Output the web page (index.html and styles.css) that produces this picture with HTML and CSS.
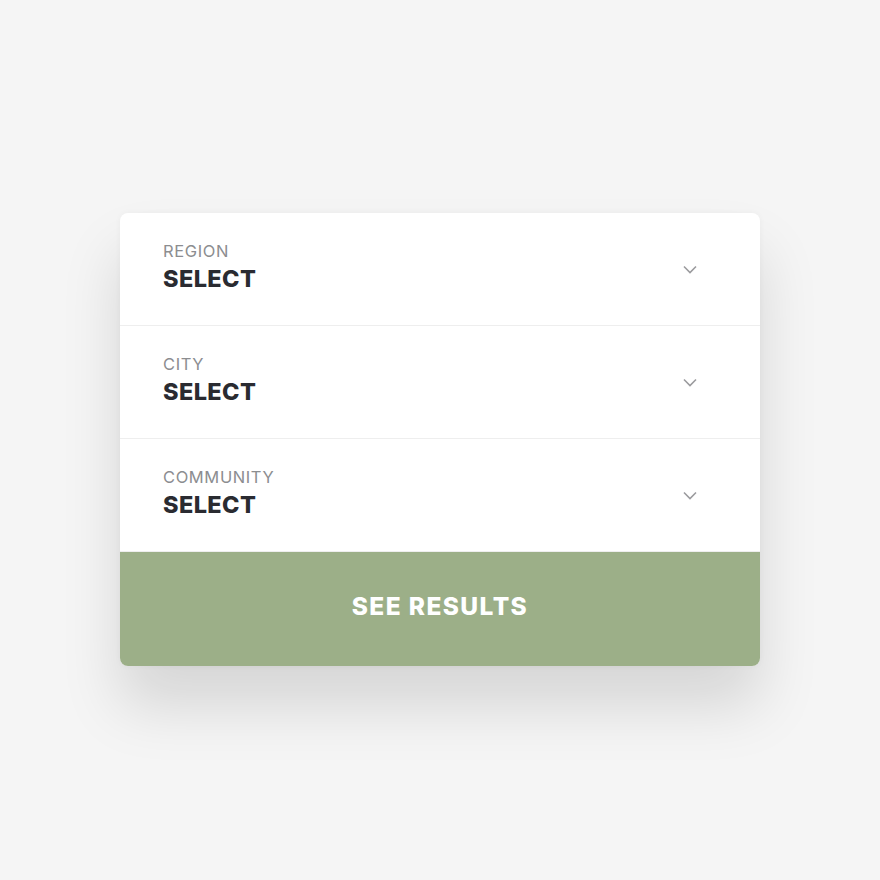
FILE: index.html
```html
<!DOCTYPE html>
<html lang="en">
<head>
    <meta charset="UTF-8">
    <meta name="viewport" content="width=device-width, initial-scale=1.0">
    <title>Search</title>
    <link rel="stylesheet" href="styles.css">
</head>
<body>
    <form class="finder" action="#">
        <div class="field">
            <div class="field-text">
                <p class="label">REGION</p>
                <p class="value">SELECT</p>
            </div>
            <svg class="chevron" width="14" height="9" viewBox="0 0 14 9"><path d="M1 1.5l6 6 6-6" fill="none" stroke="#9b9b9e" stroke-width="1.6"/></svg>
        </div>
        <div class="field">
            <div class="field-text">
                <p class="label">CITY</p>
                <p class="value">SELECT</p>
            </div>
            <svg class="chevron" width="14" height="9" viewBox="0 0 14 9"><path d="M1 1.5l6 6 6-6" fill="none" stroke="#9b9b9e" stroke-width="1.6"/></svg>
        </div>
        <div class="field">
            <div class="field-text">
                <p class="label">COMMUNITY</p>
                <p class="value">SELECT</p>
            </div>
            <svg class="chevron" width="14" height="9" viewBox="0 0 14 9"><path d="M1 1.5l6 6 6-6" fill="none" stroke="#9b9b9e" stroke-width="1.6"/></svg>
        </div>
        <button class="submit">SEE RESULTS</button>
    </form>
</body>
</html>
```

FILE: styles.css
```css
* {
    box-sizing: border-box;
    margin: 0;
}
html {
    background-color: #f5f5f5;
}
body {
    min-height: 880px;
    font-family: Inter, "Noto Sans", sans-serif;
    padding-top: 213px;
}
.finder {
    width: 640px;
    margin: 0 auto;
    background-color: #fff;
    border-radius: 8px;
    box-shadow: 0 40px 60px rgba(0, 0, 0, .13), 0 0 6px rgba(0, 0, 0, .04);
    display: flex;
    flex-direction: column;
    overflow: hidden;
}
.field {
    height: 113px;
    padding: 28px 63px 0 43px;
    display: flex;
    flex-direction: row;
    align-items: flex-start;
    border-bottom: 1px solid #eeeeee;
}
.field:nth-child(3) {
    height: 113px;
}
.field-text {
    flex-grow: 1;
}
.label {
    font-size: 16.5px;
    line-height: 20px;
    letter-spacing: .6px;
    color: #8c8d90;
}
.value {
    margin-top: 4px;
    font-size: 23.5px;
    line-height: 28px;
    font-weight: 800;
    letter-spacing: .4px;
    color: #2a2b31;
}
.chevron {
    margin-top: 24px;
}
.submit {
    height: 114px;
    padding-bottom: 7px;
    border: none;
    background-color: #9caf88;
    color: #fff;
    font-family: inherit;
    font-size: 24.5px;
    font-weight: 800;
    letter-spacing: 1.4px;
    cursor: pointer;
}
```
